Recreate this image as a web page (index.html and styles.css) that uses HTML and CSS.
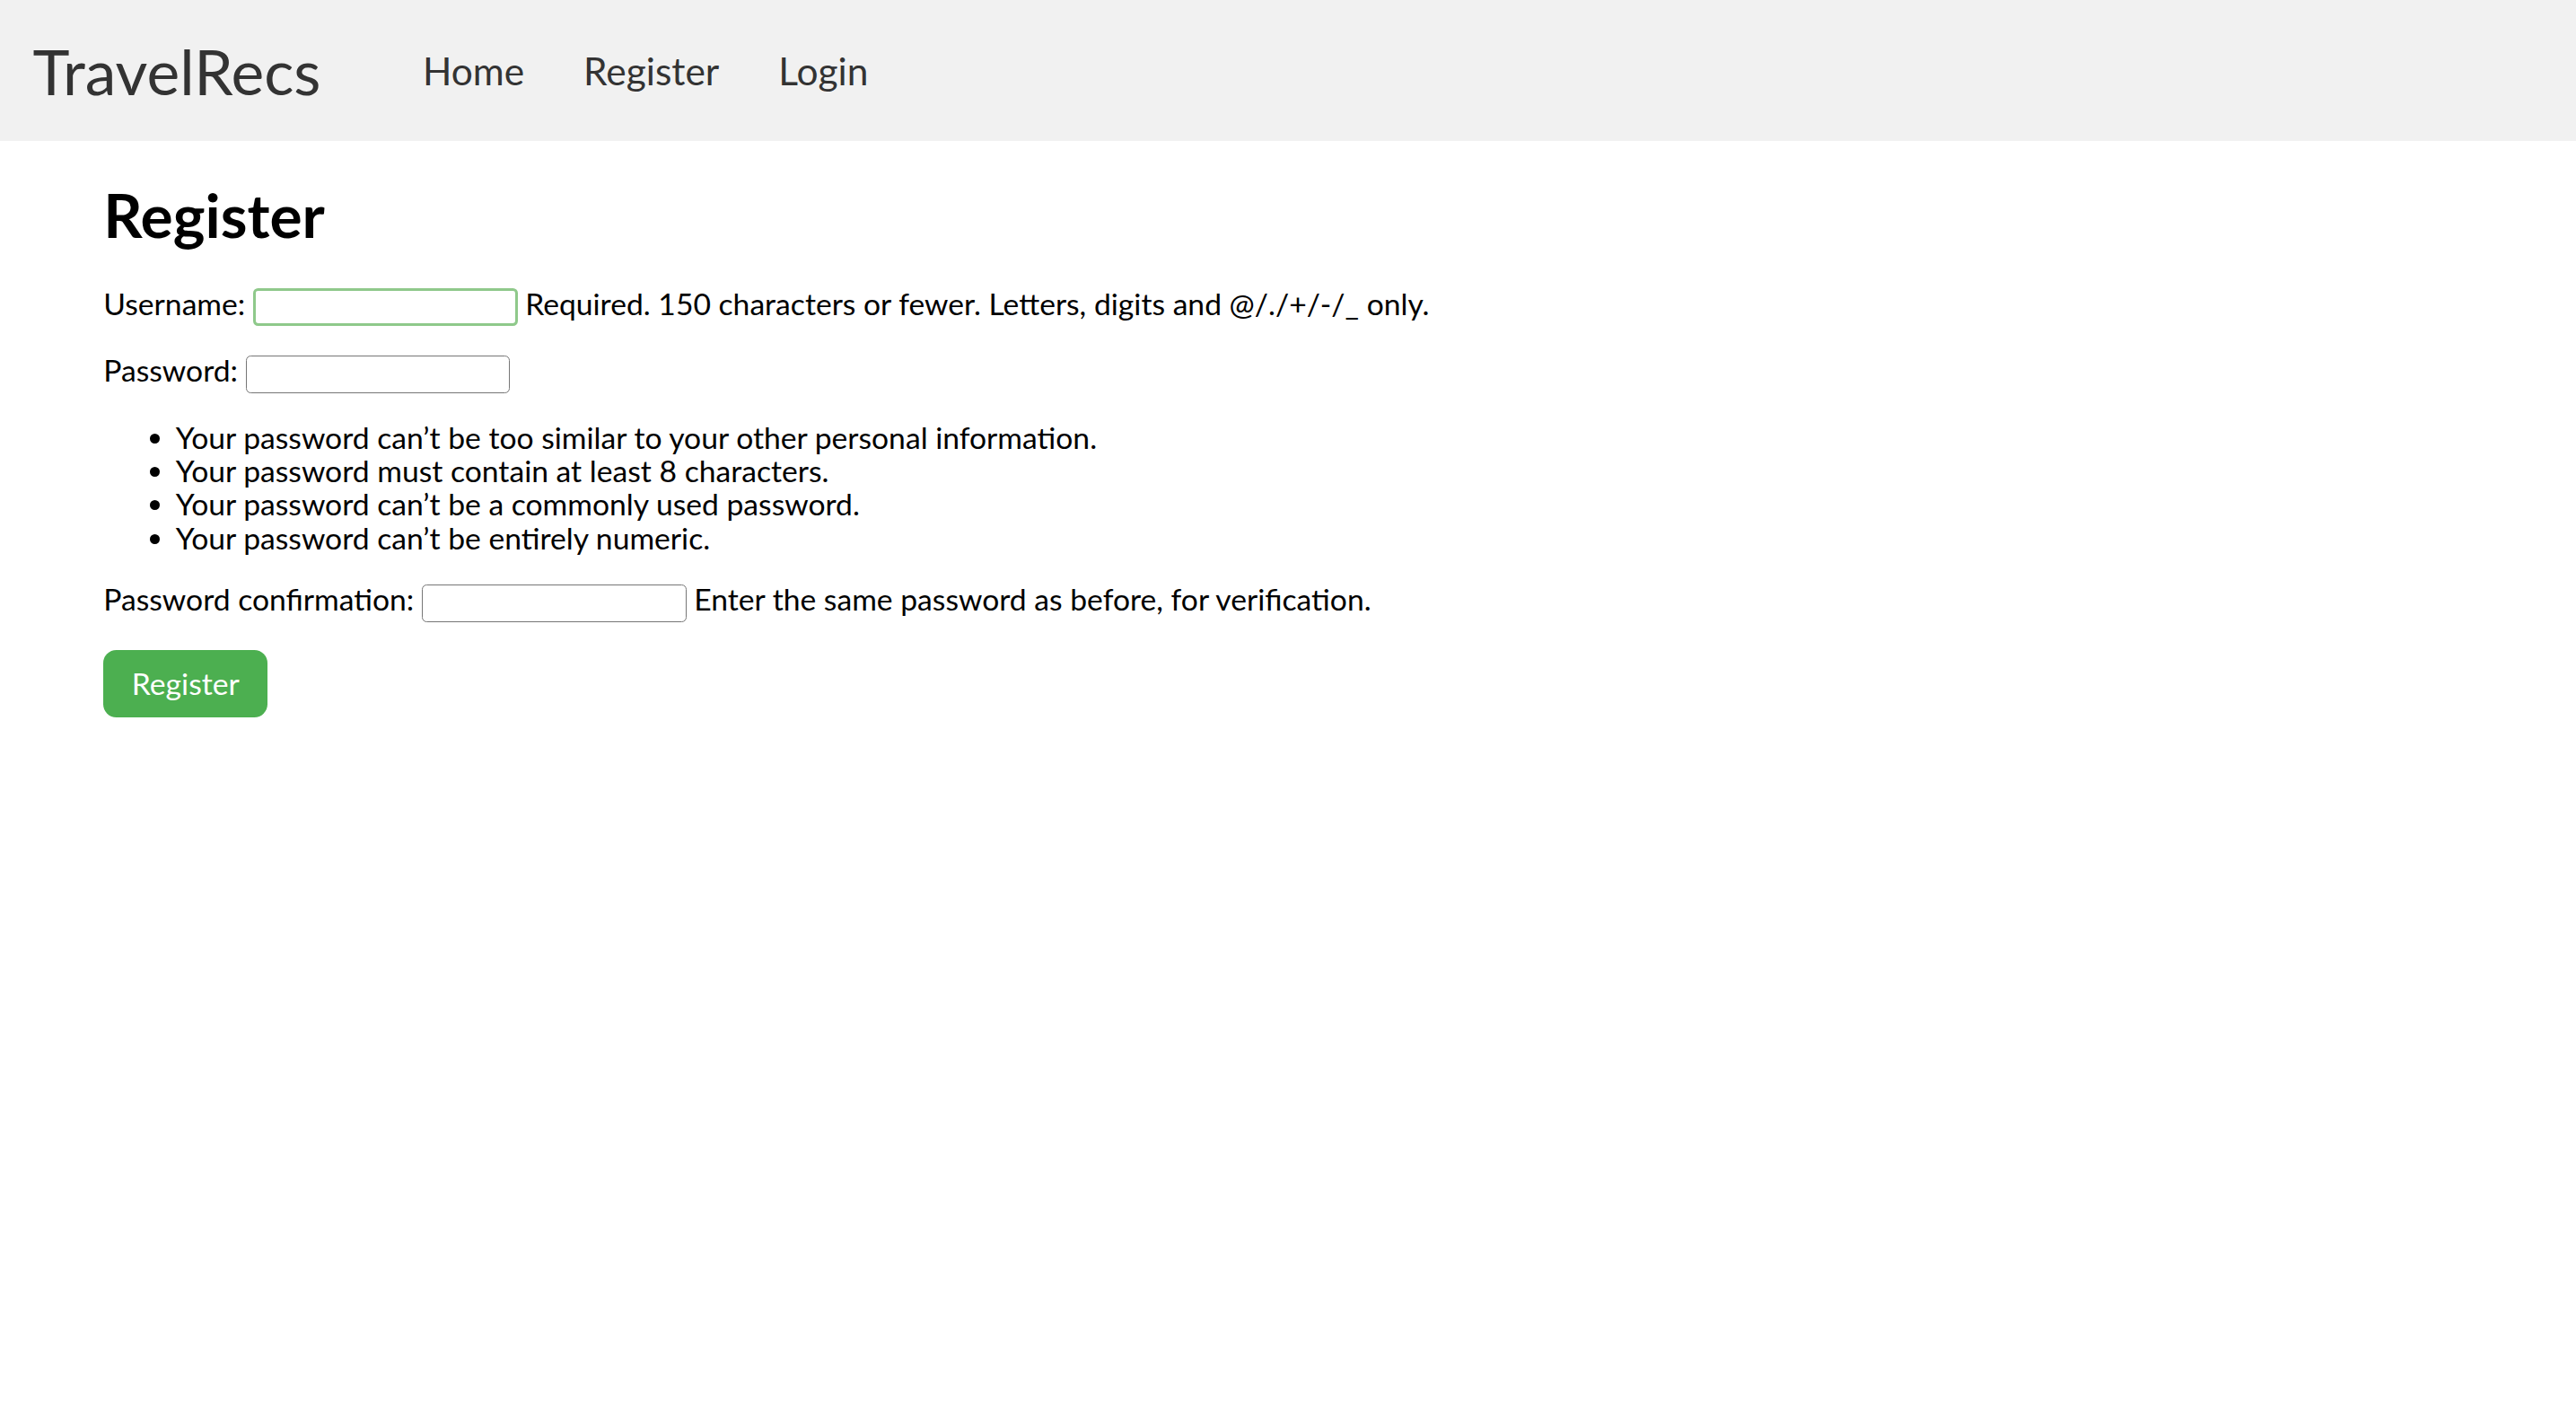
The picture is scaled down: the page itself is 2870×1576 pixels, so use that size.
FILE: index.html
```html
<!DOCTYPE html>
<html lang="en">
<head>
<meta charset="utf-8">
<title>Register - TravelRecs</title>
<link rel="stylesheet" href="styles.css">
</head>
<body>
<header class="topbar">
  <a class="brand" href="#">TravelRecs</a>
  <nav class="nav">
    <a href="#">Home</a>
    <a href="#">Register</a>
    <a href="#">Login</a>
  </nav>
</header>
<main class="content">
  <h1 class="title">Register</h1>
  <form class="form">
    <p class="row"><label for="u">Username:</label> <input id="u" class="field field-focus" type="text"> <span class="help">Required. 150 characters or fewer. Letters, digits and @/./+/-/_ only.</span></p>
    <p class="row"><label for="p1">Password:</label> <input id="p1" class="field" type="password"></p>
    <ul class="rules">
      <li>Your password can’t be too similar to your other personal information.</li>
      <li>Your password must contain at least 8 characters.</li>
      <li>Your password can’t be a commonly used password.</li>
      <li>Your password can’t be entirely numeric.</li>
    </ul>
    <p class="row"><label for="p2">Password confirmation:</label> <input id="p2" class="field" type="password"> <span class="help">Enter the same password as before, for verification.</span></p>
    <button class="btn" type="button">Register</button>
  </form>
</main>
</body>
</html>
```

FILE: styles.css
```css
html {
  zoom: 1.8304;
}
body {
  margin: 0;
  font-family: Lato, "Open Sans", sans-serif;
  color: #000;
  background: #fff;
}
.topbar {
  display: flex;
  align-items: center;
  height: 86px;
  background: #f1f1f1;
  padding-left: 20px;
}
.brand {
  font-size: 38px;
  color: #333;
  text-decoration: none;
  margin-right: 62px;
}
.nav {
  display: flex;
  gap: 36px;
}
.nav a {
  font-size: 23.2px;
  color: #333;
  text-decoration: none;
}
.content {
  padding: 0 63px;
}
.title {
  font-size: 37px;
  font-weight: 700;
  margin: 22px 0 20px;
  line-height: 1.2;
}
.form {
  font-size: 18.4px;
}
.row {
  margin: 0 0 15px;
  line-height: 25px;
}
.field {
  width: 161px;
  height: 23px;
  box-sizing: border-box;
  border: 1px solid #767676;
  border-radius: 3px;
  vertical-align: middle;
  font: inherit;
  padding: 0 4px;
}
.field-focus {
  border: 2px solid #8fc98b;
}
.rules {
  margin: 17px 0 15px;
  padding-left: 44px;
  line-height: 20.3px;
}
.btn {
  display: block;
  margin-top: 17px;
  width: 100px;
  height: 41px;
  background: #4caf50;
  color: #fff;
  border: none;
  border-radius: 8px;
  font-family: inherit;
  font-size: 18.4px;
}
```
